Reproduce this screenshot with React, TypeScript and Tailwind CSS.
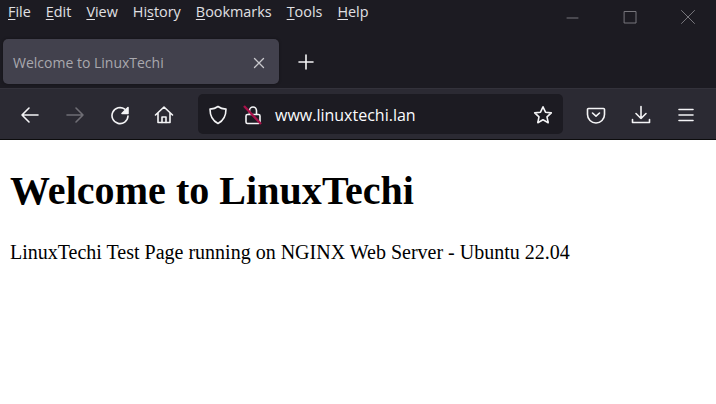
import React from 'react';

const menus: [string, string, string][] = [
  ['', 'F', 'ile'],
  ['', 'E', 'dit'],
  ['', 'V', 'iew'],
  ['Hi', 's', 'tory'],
  ['', 'B', 'ookmarks'],
  ['', 'T', 'ools'],
  ['', 'H', 'elp'],
];

const stroke = {
  fill: 'none',
  stroke: 'currentColor',
  strokeWidth: 1.6,
  strokeLinecap: 'round' as const,
  strokeLinejoin: 'round' as const,
};

const Icon = ({ children, className = '' }: { children: React.ReactNode; className?: string }) => (
  <svg width="20" height="20" viewBox="0 0 20 20" className={className} {...stroke}>
    {children}
  </svg>
);

const ToolButton = ({ children, className = '' }: { children: React.ReactNode; className?: string }) => (
  <div className={`flex items-center justify-center w-[20px] h-[20px] mt-[2px] shrink-0 ${className}`}>{children}</div>
);

export default function App() {
  return (
    <div className="w-[716px] h-[404px] overflow-hidden bg-white flex flex-col font-['Liberation_Serif',serif]">
      {/* title and tab area */}
      <div className="bg-[#1c1b22] h-[88px] shrink-0 flex flex-col">
        <div className="flex items-start h-[39px] shrink-0">
          <div className="flex gap-[15px] pl-[8px] pt-[3px] text-[14.4px] leading-[18px] text-[#e0e0e4] font-['Open_Sans',sans-serif]">
            {menus.map(([a, u, b]) => (
              <span key={a + u + b}>
                {a}
                <span className="underline underline-offset-2">{u}</span>
                {b}
              </span>
            ))}
          </div>
          <div className="ml-auto flex items-center h-[33px] text-[#77767c]">
            <svg width="13" height="14" viewBox="0 0 13 14" className="mr-[44px]" {...stroke} strokeWidth={1}>
              <path d="M1 8h11" />
            </svg>
            <svg width="14" height="14" viewBox="0 0 14 14" className="mr-[43px]" {...stroke} strokeWidth={1}>
              <path d="M1.5 1.5h11.5v11.5h-11.5z" />
            </svg>
            <svg width="16" height="16" viewBox="0 0 16 16" className="mr-[20px]" {...stroke} strokeWidth={1}>
              <path d="M1.5 1.5l13 13M14.5 1.5l-13 13" />
            </svg>
          </div>
        </div>
        <div className="flex items-center h-[45px] pl-[3px]">
          <div className="w-[276px] h-[45px] rounded-[5px] bg-[#42414d] flex items-center pl-[10px] pr-[14px] pt-[2px] shadow-[0_0_3px_rgba(0,0,0,0.4)]">
            <span className="text-[14px] text-[#a9a8ae] font-['Open_Sans',sans-serif]">Welcome to LinuxTechi</span>
            <svg width="12" height="12" viewBox="0 0 12 12" className="ml-auto text-[#c8c8cc]" {...stroke} strokeWidth={1.3}>
              <path d="M1.5 1.5l9 9M10.5 1.5l-9 9" />
            </svg>
          </div>
          <svg width="16" height="16" viewBox="0 0 16 16" className="ml-[19px] text-[#f4f4f6]" {...stroke}>
            <path d="M8 1v14M1 8h14" />
          </svg>
        </div>
      </div>

      {/* navigation toolbar */}
      <div className="bg-[#2b2a33] h-[52px] shrink-0 flex items-center border-t border-[#33323b] border-b-[1px] border-b-[#0c0c0d] text-[#f4f4f6]">
        <div className="flex items-center pl-[20px] gap-[25px]">
          <ToolButton>
            <Icon>
              <path d="M2 10h16M9 3l-7 7 7 7" />
            </Icon>
          </ToolButton>
          <ToolButton className="text-[#6f6e75]">
            <Icon>
              <path d="M2 10h16M11 3l7 7-7 7" />
            </Icon>
          </ToolButton>
          <ToolButton>
            <Icon>
              <path d="M18 11a8 8 0 1 1-3.2-6.8" />
              <path d="M18 2.5v6h-6z" fill="currentColor" />
            </Icon>
          </ToolButton>
          <ToolButton className="-ml-[1px]">
            <Icon>
              <path d="M1.5 10L10 2l8.5 8M4 8v9.5h12V8" />
              <path d="M8 17.5V12h4v5.5" />
            </Icon>
          </ToolButton>
        </div>
        <div className="ml-[24px] w-[365px] h-[40px] rounded-[5px] bg-[#1c1b22] flex items-center pl-[10px] pr-[10px]">
          <Icon className="mt-[2px]">
            <path d="M10 1.5c2.2 1.6 4.6 2.4 8 2.6 0 7.5-2.5 11.8-8 14.4-5.5-2.6-8-6.9-8-14.4 3.4-.2 5.8-1 8-2.6z" />
          </Icon>
          <div className="relative ml-[15px] mt-[2px] w-[20px] h-[20px]">
            <Icon>
              <path d="M6.5 9V5.5a3.5 3.5 0 0 1 7 0V9" />
              <rect x="3" y="9.5" width="14" height="9" rx="1.5" />
            </Icon>
            <svg width="20" height="20" viewBox="0 0 20 20" className="absolute left-0 top-0">
              <path d="M1 1l17 18" stroke="#a8124a" strokeWidth="2.4" />
            </svg>
          </div>
          <span className="ml-[12px] mt-[2px] text-[16px] text-[#fbfbfe] font-['Open_Sans',sans-serif]">www.linuxtechi.lan</span>
          <Icon className="ml-auto mt-[2px]">
            <path d="M10 1.8l2.5 5.4 5.8.7-4.3 4 1.2 5.8-5.2-2.9-5.2 2.9 1.2-5.8-4.3-4 5.8-.7z" />
          </Icon>
        </div>
        <div className="flex items-center ml-[23px] gap-[25px]">
          <ToolButton>
            <Icon>
              <path d="M2.5 3.5h15a1 1 0 0 1 1 1v5a8.5 8.5 0 0 1-17 0v-5a1 1 0 0 1 1-1z" />
              <path d="M6.5 8l3.5 3.2L13.5 8" />
            </Icon>
          </ToolButton>
          <ToolButton>
            <Icon>
              <path d="M10 1.5v12M5 8.5l5 5 5-5M1.5 14.5v3h17v-3" />
            </Icon>
          </ToolButton>
          <ToolButton>
            <Icon>
              <path d="M3 4.5h14M3 10h14M3 15.5h14" />
            </Icon>
          </ToolButton>
        </div>
      </div>

      {/* page */}
      <div className="flex-1 bg-white text-black px-[10px]">
        <h1 className="mt-[28px] text-[40px] leading-[46px] font-bold tracking-[0.05px]">Welcome to LinuxTechi</h1>
        <p className="mt-[26px] text-[20px] leading-[24px]">LinuxTechi Test Page running on NGINX Web Server - Ubuntu 22.04</p>
      </div>
    </div>
  );
}
